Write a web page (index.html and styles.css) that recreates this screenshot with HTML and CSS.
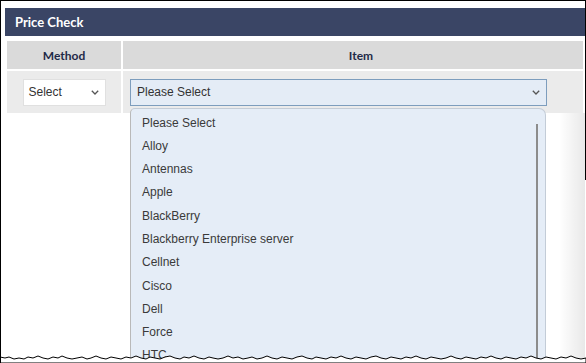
FILE: index.html
```html
<!DOCTYPE html>
<html lang="en">

<head>
    <meta charset="UTF-8">
    <meta name="viewport" content="width=device-width, initial-scale=1.0">
    <title>Price Check</title>
    <link rel="stylesheet" href="styles.css">
</head>

<body>
    <div class="frame">
        <div class="panel">
            <div class="panel-title">Price Check</div>
            <table class="check-table">
                <thead>
                    <tr>
                        <th class="col-method">Method</th>
                        <th class="col-item">Item</th>
                    </tr>
                </thead>
                <tbody>
                    <tr>
                        <td class="col-method">
                            <div class="select select-method">
                                <span>Select</span>
                                <svg class="chevron" width="8" height="5" viewBox="0 0 8 5"><polyline points="0.8,0.8 4,4 7.2,0.8" /></svg>
                            </div>
                        </td>
                        <td class="col-item">
                            <div class="item-field">
                                <div class="select select-item">
                                    <span>Please Select</span>
                                    <svg class="chevron" width="8" height="5" viewBox="0 0 8 5"><polyline points="0.8,0.8 4,4 7.2,0.8" /></svg>
                                </div>
                                <!-- open list of the item select -->
                                <div class="dropdown">
                                    <ul>
                                        <li>Please Select</li>
                                        <li>Alloy</li>
                                        <li>Antennas</li>
                                        <li>Apple</li>
                                        <li>BlackBerry</li>
                                        <li>Blackberry Enterprise server</li>
                                        <li>Cellnet</li>
                                        <li>Cisco</li>
                                        <li>Dell</li>
                                        <li>Force</li>
                                        <li>HTC</li>
                                        <li>Huawei</li>
                                    </ul>
                                    <div class="scroll-thumb"></div>
                                </div>
                            </div>
                        </td>
                    </tr>
                </tbody>
            </table>
        </div>
        <div class="edge-right"></div>
        <div class="edge-shadow"></div>
        <svg class="torn" width="586" height="10" viewBox="0 0 586 10">
            <polygon points="0,4 5,5 9,4 14,6 19,5 24,6 28,4 33,5 38,3 43,5 48,6 53,4 58,5 62,3 67,5 72,6 77,5 82,4 87,6 91,5 96,3 101,5 106,6 111,4 116,5 121,6 126,4 131,5 136,3 141,5 146,6 150,4 155,5 160,6 165,4 170,3 175,5 180,6 184,4 189,5 194,3 199,5 204,6 209,4 213,5 218,6 223,5 228,3 233,5 238,4 243,6 248,5 252,4 257,6 262,5 267,3 272,5 277,6 282,4 287,5 292,6 297,4 302,3 307,5 312,6 316,4 321,5 326,6 331,4 336,5 341,3 346,5 351,6 356,4 361,5 366,6 371,4 376,3 381,5 386,6 391,4 396,5 401,6 406,4 411,5 416,3 421,5 426,6 431,4 436,5 441,6 446,5 451,3 456,5 461,6 466,4 471,5 476,6 481,4 486,5 491,3 496,5 501,6 506,4 511,5 516,6 521,4 526,5 531,3 536,5 541,6 546,4 551,5 556,6 561,4 566,5 571,3 576,5 581,6 586,5 586,10 0,10" />
        </svg>
    </div>
</body>

</html>
```

FILE: styles.css
```css
body {
    margin: 0;
    background: #fff;
}

.frame {
    position: relative;
    width: 586px;
    height: 363px;
    box-sizing: border-box;
    border-left: 1px solid #000;
    border-top: 1px solid #000;
    overflow: hidden;
    background: #fff;
}

.panel {
    width: 580px;
    padding: 7px 0 0 4px;
}

.panel-title {
    height: 28px;
    line-height: 28px;
    padding-left: 10px;
    background: #3a4565;
    color: #fff;
    font-family: Lato, "Open Sans", sans-serif;
    font-weight: bold;
    font-size: 13px;
}

.check-table {
    width: 580px;
    margin-top: 3px;
    border-spacing: 2px;
    font-family: "Liberation Sans", Arial, sans-serif;
}

.check-table th {
    height: 28px;
    padding: 0;
    background: #dadada;
    color: #1f2a48;
    font-family: Lato, "Open Sans", sans-serif;
    font-weight: bold;
    font-size: 12px;
    text-align: center;
}

th.col-item {
    padding-left: 16px;
}

.check-table td {
    height: 42px;
    padding: 0;
    background: #ebebeb;
    vertical-align: middle;
}

.col-method {
    width: 114px;
}

td.col-method .select {
    margin: 0 auto;
}

td.col-item {
    padding-left: 7px;
}

.select {
    display: flex;
    align-items: center;
    justify-content: space-between;
    box-sizing: border-box;
    height: 27px;
    padding: 0 6px 0 5px;
    font-size: 12px;
    color: #333;
}

.select-method {
    width: 83px;
    background: #fff;
    border: 1px solid #e0e0e0;
}

.select-item {
    width: 417px;
    background: #e4ecf6;
    border: 1px solid #7d9dbd;
    padding-left: 6px;
}

.chevron polyline {
    fill: none;
    stroke: #555;
    stroke-width: 1.3;
}

.item-field {
    position: relative;
    width: 417px;
}

.dropdown {
    position: absolute;
    top: 29px;
    left: 0;
    width: 416px;
    height: 270px;
    box-sizing: border-box;
    background: #e5edf7;
    border: 1px solid #c3ccd7;
    border-left-color: #b9b9b9;
    border-radius: 5px 7px 0 0;
    font-size: 12px;
    color: #3a3a3a;
}

.dropdown ul {
    list-style: none;
    margin: 0;
    padding: 3px 0 0 11px;
}

.dropdown li {
    line-height: 23.3px;
}

.scroll-thumb {
    position: absolute;
    top: 15px;
    right: 7px;
    bottom: 0;
    width: 2px;
    background: #8c8c8c;
}

.edge-right {
    position: absolute;
    top: -1px;
    right: 0;
    width: 1px;
    height: 180px;
    background: #000;
}

.edge-shadow {
    position: absolute;
    top: 112px;
    right: 1px;
    bottom: 0;
    width: 26px;
    background: linear-gradient(to right, rgba(0, 0, 0, 0), rgba(0, 0, 0, 0.09));
}

.torn {
    position: absolute;
    left: -1px;
    bottom: 0;
    display: block;
}

.torn polygon {
    fill: #fff;
    stroke: #000;
    stroke-width: 1;
}
```
